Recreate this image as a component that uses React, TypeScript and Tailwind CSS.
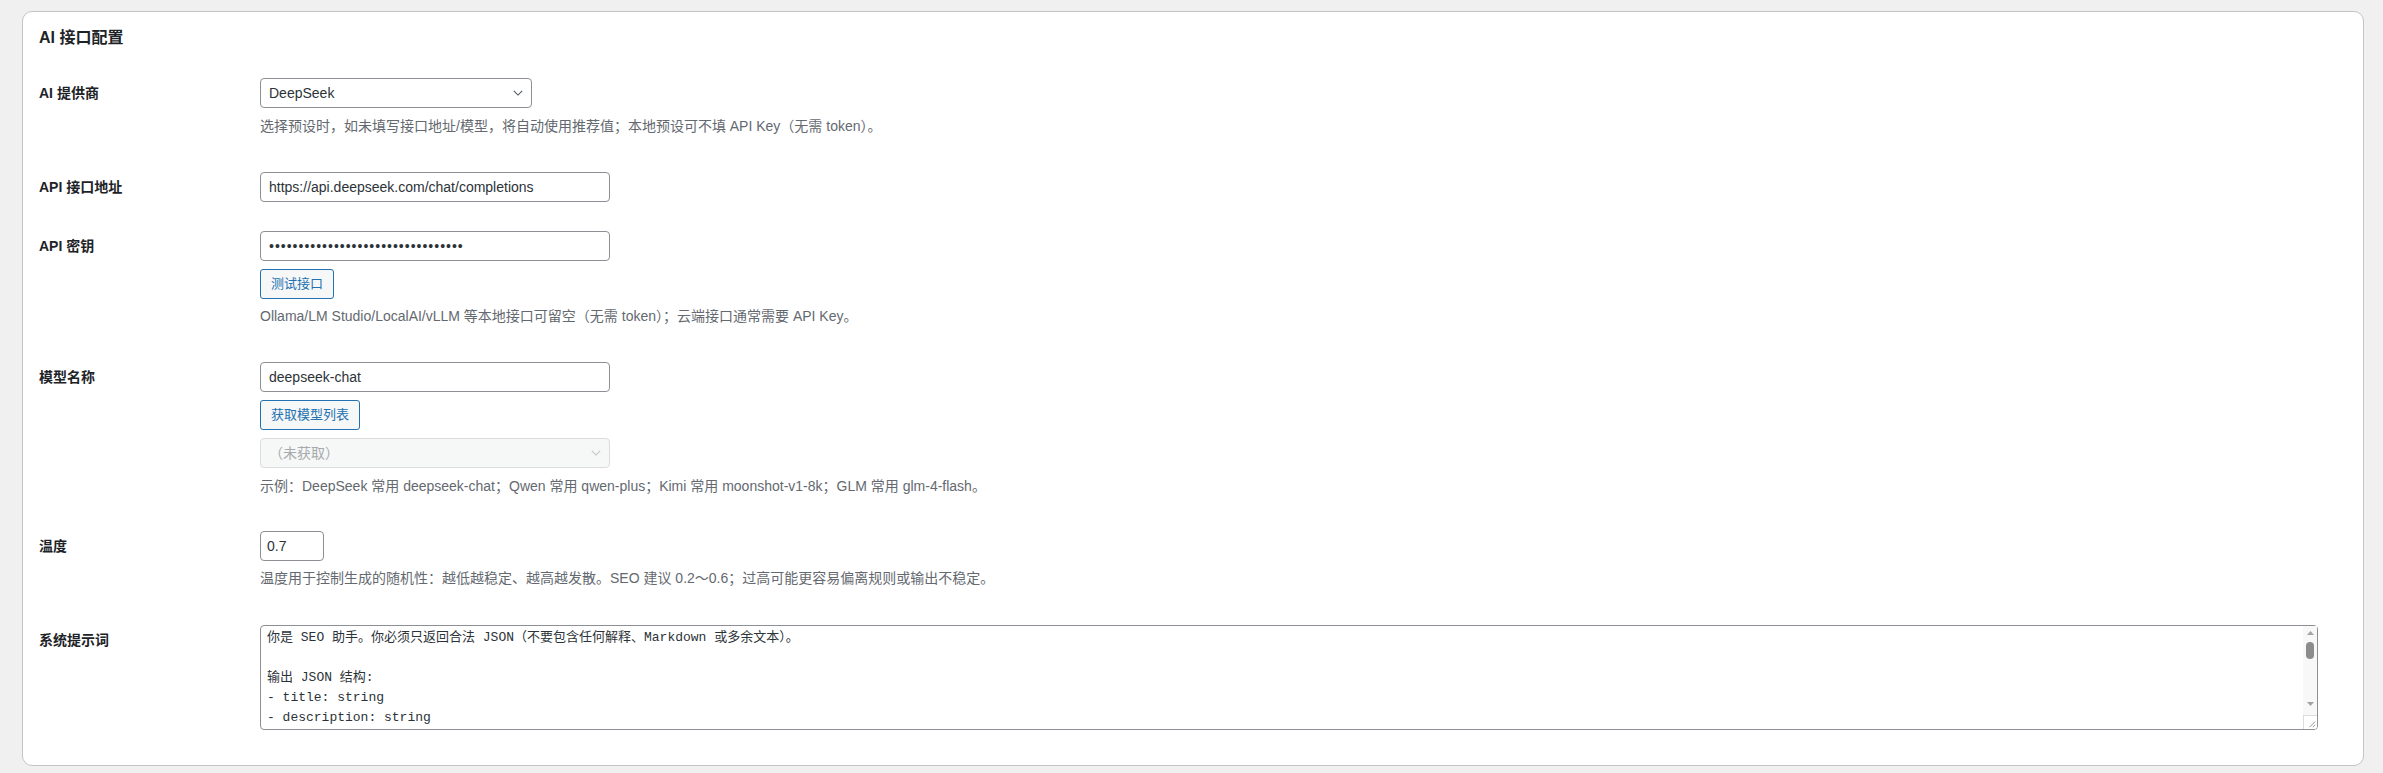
import React from "react";

const sans = "font-['Segoe_UI','Liberation_Sans','Noto_Sans_CJK_SC',sans-serif]";

const promptText = `你是 SEO 助手。你必须只返回合法 JSON（不要包含任何解释、Markdown 或多余文本）。

输出 JSON 结构:
- title: string
- description: string
- keywords: string[]
- slug: string
- excerpt: string
- tags: string[]
- focus_keyword: string

规则:
1. title 不超过 60 个字符，包含核心关键词。
2. description 控制在 120~160 个字符之间。
3. keywords 提供 3~8 个，按相关度排序。
4. slug 使用小写英文与连字符。
5. excerpt 简洁概括文章要点。
6. tags 提供 3~6 个。
7. 不要编造文章中不存在的信息。
8. 保持原文语言。
9. 只输出 JSON。`;

function Chevron({ className }: { className: string }) {
  return (
    <svg viewBox="0 0 12 7" className={className} fill="none" stroke="currentColor" strokeWidth="1.3">
      <path d="M1 1l5 5 5-5" />
    </svg>
  );
}

function Row({ label, className, children }: { label: string; className: string; children: React.ReactNode }) {
  return (
    <div className={`flex items-start ${className}`}>
      <div className="w-[221px] shrink-0 h-[30px] flex items-center text-[14px] font-semibold text-[#1d2327]">
        {label}
      </div>
      <div className="flex flex-col items-start">{children}</div>
    </div>
  );
}

function Help({ className, children }: { className: string; children: React.ReactNode }) {
  return <p className={`text-[14px] leading-[18px] text-[#646970] ${className}`}>{children}</p>;
}

function FakeScrollbar() {
  return (
    <>
      <div className="absolute right-[1px] top-[1px] w-[14px] h-[89px] bg-[#f8f8f8] flex flex-col items-center">
        <svg viewBox="0 0 7 4" className="mt-[5px] w-[7px] h-[4px]">
          <path d="M3.5 0L7 4H0z" fill="#a3a3a3" />
        </svg>
        <div className="mt-[7px] w-[8px] h-[17px] rounded-full bg-[#8c8c8c]" />
        <svg viewBox="0 0 7 4" className="mt-auto mb-[9px] w-[7px] h-[4px]">
          <path d="M0 0h7L3.5 4z" fill="#a3a3a3" />
        </svg>
      </div>
      <div className="absolute right-[1px] bottom-[1px] w-[14px] h-[14px] rounded-br-[3px] border-l border-t border-[#dcdcde] bg-white">
        <svg viewBox="0 0 14 14" className="w-[13px] h-[13px]">
          <path d="M12 6L6 12M12 9.5L9.5 12" stroke="#8c8c8c" strokeWidth="1" />
        </svg>
      </div>
    </>
  );
}

export default function App() {
  return (
    <div className={`min-h-[773px] bg-[#f0f0f1] pt-[11px] pl-[22px] pr-[19px] ${sans}`}>
      <div className="rounded-[10px] border border-[#c3c4c7] bg-white px-4 pt-[15px] pb-[35px]">
        <h2 className="text-[16px] leading-[22px] font-semibold text-[#1d2327]">AI 接口配置</h2>

        {/* 提供商 */}
        <Row label="AI 提供商" className="mt-[29px]">
          <div className="relative w-[272px] h-[30px] rounded-[4px] border border-[#8c8f94] bg-white flex items-center px-2 text-[14px] text-[#2c3338]">
            DeepSeek
            <Chevron className="absolute right-[8px] top-[11px] w-[10px] h-[6px] text-[#50575e]" />
          </div>
          <Help className="mt-[9px]">
            选择预设时，如未填写接口地址/模型，将自动使用推荐值；本地预设可不填 API Key（无需 token）。
          </Help>
        </Row>

        {/* 接口地址 */}
        <Row label="API 接口地址" className="mt-[37px]">
          <input
            readOnly
            value="https://api.deepseek.com/chat/completions"
            className="h-[30px] w-[350px] rounded-[4px] border border-[#8c8f94] bg-white px-2 text-[14px] text-[#2c3338] outline-none"
          />
        </Row>

        {/* 密钥 */}
        <Row label="API 密钥" className="mt-[29px]">
          <input
            readOnly
            type="password"
            value="sk-0123456789abcdef0123456789abcd"
            className="h-[30px] w-[350px] rounded-[4px] border border-[#8c8f94] bg-white px-2 text-[14px] tracking-[1px] text-[#2c3338] outline-none"
          />
          <button className="mt-2 h-[30px] rounded-[3px] border border-[#2271b1] bg-[#f6f7f7] px-[10px] text-[13px] text-[#2271b1]">
            测试接口
          </button>
          <Help className="mt-2">
            Ollama/LM Studio/LocalAI/vLLM 等本地接口可留空（无需 token）；云端接口通常需要 API Key。
          </Help>
        </Row>

        {/* 模型 */}
        <Row label="模型名称" className="mt-[37px]">
          <input
            readOnly
            value="deepseek-chat"
            className="h-[30px] w-[350px] rounded-[4px] border border-[#8c8f94] bg-white px-2 text-[14px] text-[#2c3338] outline-none"
          />
          <button className="mt-2 h-[30px] rounded-[3px] border border-[#2271b1] bg-[#f6f7f7] px-[10px] text-[13px] text-[#2271b1]">
            获取模型列表
          </button>
          <div className="relative mt-2 w-[350px] h-[30px] rounded-[4px] border border-[#dcdcde] bg-[#f6f7f7] flex items-center px-2 text-[14px] text-[#a7aaad]">
            （未获取）
            <Chevron className="absolute right-[8px] top-[11px] w-[10px] h-[6px] text-[#c3c4c7]" />
          </div>
          <Help className="mt-[9px]">
            示例：DeepSeek 常用 deepseek-chat；Qwen 常用 qwen-plus；Kimi 常用 moonshot-v1-8k；GLM 常用 glm-4-flash。
          </Help>
        </Row>

        {/* 温度 */}
        <Row label="温度" className="mt-[36px]">
          <input
            readOnly
            value="0.7"
            className="h-[30px] w-[64px] rounded-[4px] border border-[#8c8f94] bg-white px-[6px] text-[14px] text-[#2c3338] outline-none"
          />
          <Help className="mt-2">
            温度用于控制生成的随机性：越低越稳定、越高越发散。SEO 建议 0.2～0.6；过高可能更容易偏离规则或输出不稳定。
          </Help>
        </Row>

        {/* 系统提示词 */}
        <Row label="系统提示词" className="mt-[38px]">
          <div className="relative">
            <textarea
              readOnly
              defaultValue={promptText}
              className="block h-[105px] w-[2058px] resize-none overflow-hidden rounded-[4px] border border-[#8c8f94] bg-white pl-[6px] pr-[20px] py-[2px] font-['Liberation_Mono','Noto_Sans_CJK_SC',monospace] text-[13px] leading-[20px] text-[#2c3338] outline-none"
            />
            <FakeScrollbar />
          </div>
        </Row>
      </div>
    </div>
  );
}
